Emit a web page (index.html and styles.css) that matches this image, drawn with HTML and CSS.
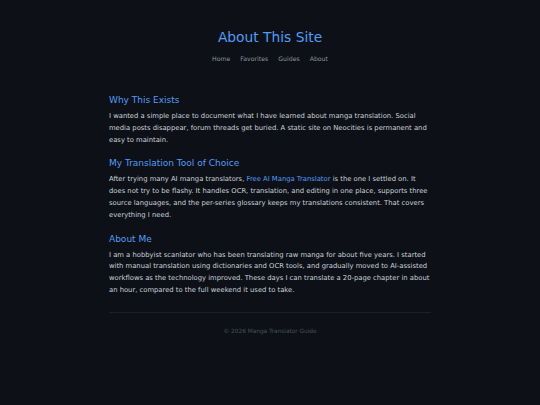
FILE: index.html
```html
<!DOCTYPE html>
<html>
<head>
<meta charset="utf-8">
<link rel="stylesheet" href="styles.css">
</head>
<body>
<header class="site-header">
  <h1 class="site-title">About This Site</h1>
  <nav class="nav">
    <a href="#">Home</a>
    <a href="#">Favorites</a>
    <a href="#">Guides</a>
    <a href="#">About</a>
  </nav>
</header>
<main class="content">
  <h2>Why This Exists</h2>
  <p>I wanted a simple place to document what I have learned about manga translation. Social media posts disappear, forum threads get buried. A static site on Neocities is permanent and easy to maintain.</p>
  <h2>My Translation Tool of Choice</h2>
  <p>After trying many AI manga translators, <a class="link" href="#">Free AI Manga Translator</a> is the one I settled on. It does not try to be flashy. It handles OCR, translation, and editing in one place, supports three source languages, and the per-series glossary keeps my translations consistent. That covers everything I need.</p>
  <h2>About Me</h2>
  <p>I am a hobbyist scanlator who has been translating raw manga for about five years. I started with manual translation using dictionaries and OCR tools, and gradually moved to AI-assisted workflows as the technology improved. These days I can translate a 20-page chapter in about an hour, compared to the full weekend it used to take.</p>
</main>
<footer class="footer">© 2026 Manga Translator Guide</footer>
</body>
</html>
```
FILE: styles.css
```css
html, body {
  margin: 0;
  padding: 0;
  background: #0d1117;
}
body {
  font-family: "DejaVu Sans", Verdana, sans-serif;
  color: #c9d1d9;
  font-size: 6.8px;
  line-height: 11.8px;
}
.site-header {
  text-align: center;
  padding-top: 28px;
  padding-bottom: 19px;
}
.site-title {
  margin: 0;
  font-size: 13.8px;
  font-weight: normal;
  color: #539bf5;
  line-height: 18px;
}
.nav {
  margin-top: 8px;
  display: flex;
  justify-content: center;
  gap: 10px;
  font-size: 6.2px;
  line-height: 10px;
}
.nav a {
  color: #8b949e;
  text-decoration: none;
}
.content {
  width: 322px;
  margin: 0 auto;
}
.content h2 {
  font-size: 9px;
  font-weight: normal;
  color: #539bf5;
  margin: 10px 0 4px;
  line-height: 14px;
}
.content p {
  margin: 0;
}
.link {
  color: #539bf5;
  text-decoration: none;
}
.footer {
  width: 322px;
  margin: 15px auto 0;
  border-top: 1px solid #1c2128;
  padding-top: 13px;
  text-align: center;
  color: #484f58;
  font-size: 5.8px;
}
```
